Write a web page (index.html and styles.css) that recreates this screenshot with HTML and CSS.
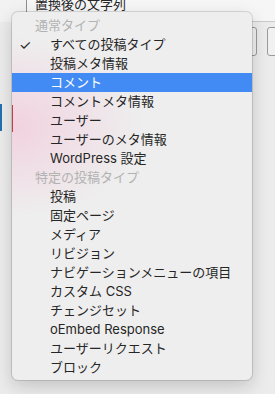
FILE: index.html
```html
<!DOCTYPE html>
<html lang="ja">
  <head>
    <meta charset="UTF-8" />
    <meta name="viewport" content="width=device-width, initial-scale=1.0" />
    <title>置換対象</title>
    <link rel="stylesheet" href="styles.css">
  </head>
  <body>
    <div class="page">
      <div class="head">
        <div class="head-side"></div>
        <div class="head-label">置換後の文字列</div>
      </div>
      <div class="inputs">
        <div class="field field-a"></div>
        <div class="field field-b"></div>
      </div>
      <div class="side-tab"></div>
    </div>

    <div class="menu">
      <span class="menu-edge"></span>
      <div class="group">通常タイプ</div>
      <div class="item checked">すべての投稿タイプ</div>
      <div class="item">投稿メタ情報</div>
      <div class="item active">コメント</div>
      <div class="item">コメントメタ情報</div>
      <div class="item">ユーザー</div>
      <div class="item">ユーザーのメタ情報</div>
      <div class="item">WordPress 設定</div>
      <div class="group">特定の投稿タイプ</div>
      <div class="item">投稿</div>
      <div class="item">固定ページ</div>
      <div class="item">メディア</div>
      <div class="item">リビジョン</div>
      <div class="item">ナビゲーションメニューの項目</div>
      <div class="item">カスタム CSS</div>
      <div class="item">チェンジセット</div>
      <div class="item">oEmbed Response</div>
      <div class="item">ユーザーリクエスト</div>
      <div class="item">ブロック</div>
    </div>
  </body>
</html>
```

FILE: styles.css
```css
body {
  margin: 0;
  padding: 0;
  width: 275px;
  height: 394px;
  overflow: hidden;
  background-color: #ececec;
  font-family: Inter, "Noto Sans CJK JP", sans-serif;
  color: #262626;
  position: relative;
}
.page {
  height: 100%;
}
.head {
  display: flex;
  height: 22px;
}
.head-side {
  width: 26px;
  background-color: #f2f2f2;
}
.head-label {
  flex: 1;
  background-color: #f6f6f6;
  border-left: 1px solid #8e8e8e;
  border-bottom: 1px solid #c9c9c9;
  padding-left: 8px;
  font-size: 13px;
  line-height: 13px;
  margin-top: -2px;
  overflow: hidden;
  box-sizing: border-box;
  height: 24px;
}
.inputs {
  display: flex;
  justify-content: flex-end;
  gap: 10px;
  margin-top: 5px;
}
.field {
  height: 29px;
  border: 1px solid #9a9a9a;
  border-radius: 3px;
  background-color: #f1f1f1;
  box-sizing: border-box;
}
.field-a {
  width: 40px;
}
.field-b {
  width: 20px;
  margin-right: -12px;
}
.side-tab {
  width: 2px;
  height: 27px;
  margin-top: 48px;
  background-color: #2271b1;
}
.menu {
  position: absolute;
  left: 12px;
  top: 12px;
  width: 240px;
  height: 368px;
  padding: 4px 0 3px;
  box-sizing: border-box;
  border-radius: 6px;
  background:
    radial-gradient(ellipse 130px 90px at 0 115px, rgba(242, 205, 221, 0.85), rgba(242, 205, 221, 0) 100%),
    #eeeeee;
  box-shadow: 0 0 0 1px rgba(0, 0, 0, 0.12), 0 6px 18px rgba(0, 0, 0, 0.18);
  font-size: 13px;
}
.menu-edge {
  position: absolute;
  left: 0;
  top: 93px;
  width: 1px;
  height: 27px;
  background-color: #cf3a4a;
}
.group,
.item {
  height: 19px;
  line-height: 19px;
  white-space: nowrap;
}
.group {
  padding-left: 23px;
  color: #b2b2b2;
}
.item {
  padding-left: 38px;
  position: relative;
}
.item.checked::before {
  content: "✓";
  position: absolute;
  left: 7px;
  top: 0;
  font-size: 14px;
}
.item.active {
  background-color: #428bf5;
  color: #fff;
}
```
